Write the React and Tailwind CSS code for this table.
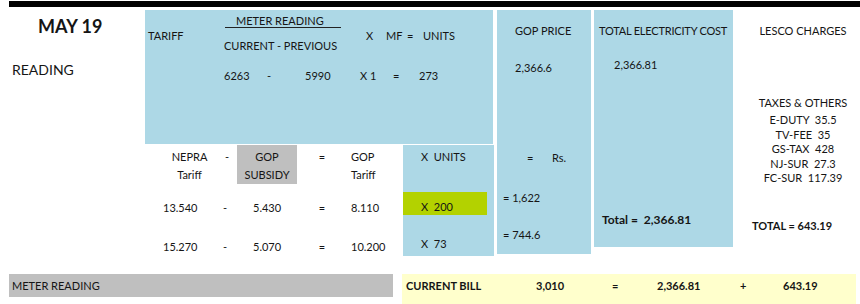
export default function App() {
  const blue = "bg-[#add8e6]";
  return (
    <div className="w-[860px] h-[304px] bg-white text-[#151515] font-['Lato',sans-serif] text-[11px] leading-none overflow-hidden">
      <div className="pl-[9px] pt-[1px]">
        <div className="h-[6px] bg-black" />
      </div>
      <div className="flex mt-[3px] h-[264px]">
        {/* left column */}
        <div className="w-[145px] shrink-0">
          <div className="pl-[38px] pt-[7px] text-[18px] font-bold">MAY 19</div>
          <div className="pl-[12px] mt-[28px] text-[14px]">READING</div>
        </div>

        {/* middle */}
        <div className="w-[349px] shrink-0">
          <div className={`h-[134px] w-[348px] ${blue} flex`}>
            <div className="w-[79px] pl-[3px] pt-[20px]">TARIFF</div>
            <div className="flex-1 flex flex-col">
              <div className="flex">
                <div className="w-[142px]">
                  <div className="pt-[5px] pl-[1px]">
                    <div className="w-[116px] pl-[11px] pb-[1px] border-b border-[#222]">METER READING</div>
                  </div>
                  <div className="mt-[12px]">CURRENT - PREVIOUS</div>
                </div>
                <div className="pt-[20px] flex">
                  <div className="w-[20px]">X</div>
                  <div className="w-[21px]">MF</div>
                  <div className="w-[16px]">=</div>
                  <div>UNITS</div>
                </div>
              </div>
              <div className="flex mt-[19px]">
                <div className="w-[43px]">6263</div>
                <div className="w-[38px]">-</div>
                <div className="w-[55px]">5990</div>
                <div className="w-[10px]">X</div>
                <div className="w-[23px]">1</div>
                <div className="w-[26px]">=</div>
                <div>273</div>
              </div>
            </div>
          </div>

          {/* tariff table */}
          <div className="mt-[1px] flex h-[111px]">
            <div className="w-[77px] flex flex-col">
              <div className="pt-[6px] ml-[26px] w-[37px] text-center">NEPRA</div>
              <div className="mt-[7px] ml-[26px] w-[37px] text-center">Tariff</div>
              <div className="mt-[22px] pl-[18px]">13.540</div>
              <div className="mt-[28px] pl-[18px]">15.270</div>
            </div>
            <div className="w-[15px] flex flex-col">
              <div className="pt-[6px] pl-[3px]">-</div>
              <div className="mt-[40px] pl-[1px]">-</div>
              <div className="mt-[28px] pl-[1px]">-</div>
            </div>
            <div className="w-[60px] flex flex-col">
              <div className="h-[39px] bg-[#bfbfbf] flex flex-col items-center">
                <div className="pt-[6px]">GOP</div>
                <div className="mt-[7px]">SUBSIDY</div>
              </div>
              <div className="mt-[18px] pl-[16px]">5.430</div>
              <div className="mt-[28px] pl-[16px]">5.070</div>
            </div>
            <div className="w-[50px] flex flex-col items-center">
              <div className="pt-[6px]">=</div>
              <div className="mt-[40px]">=</div>
              <div className="mt-[28px]">=</div>
            </div>
            <div className="w-[56px] flex flex-col pl-[4px]">
              <div className="pt-[6px]">GOP</div>
              <div className="mt-[7px]">Tariff</div>
              <div className="mt-[22px]">8.110</div>
              <div className="mt-[28px]">10.200</div>
            </div>
            <div className={`w-[91px] ${blue} flex flex-col`}>
              <div className="pt-[6px] pl-[18px] whitespace-pre">{"X  UNITS"}</div>
              <div className="mt-[30px] w-[84px] h-[23px] bg-[#b3d200] pl-[18px] pt-[9px] whitespace-pre">{"X  200"}</div>
              <div className="mt-[23px] pl-[18px] whitespace-pre">{"X  73"}</div>
            </div>
          </div>
        </div>

        {/* GOP price */}
        <div className={`ml-[3px] w-[94px] h-[244px] ${blue} shrink-0 flex flex-col`}>
          <div className="pt-[15px] pl-[18px]">GOP PRICE</div>
          <div className="mt-[26px] pl-[18px]">2,366.6</div>
          <div className="mt-[79px] pl-[30px] flex">
            <div className="w-[25px]">=</div>
            <div>Rs.</div>
          </div>
          <div className="mt-[29px] pl-[6px]">= 1,622</div>
          <div className="mt-[26px] pl-[6px]">= 744.6</div>
        </div>

        {/* total electricity cost */}
        <div className={`ml-[3px] w-[139px] h-[237px] ${blue} shrink-0 flex flex-col`}>
          <div className="pt-[15px] pl-[5px] tracking-[-0.2px]">TOTAL ELECTRICITY COST</div>
          <div className="mt-[23px] pl-[20px]">2,366.81</div>
          <div className="mt-[144px] pl-[8px] text-[12px] font-bold whitespace-pre">{"Total =  2,366.81"}</div>
        </div>

        {/* lesco */}
        <div className="flex-1 flex flex-col">
          <div className="pt-[15px] pl-[13px] text-center">LESCO CHARGES</div>
          <div className="mt-[61px] pl-[13px] text-center">TAXES &amp; OTHERS</div>
          <div className="mt-[5px] pl-[13px] text-center leading-[14.5px] whitespace-pre">
            <div>{"E-DUTY  35.5"}</div>
            <div>{"TV-FEE  35"}</div>
            <div>{"GS-TAX  428"}</div>
            <div>{"NJ-SUR  27.3"}</div>
            <div>{"FC-SUR  117.39"}</div>
          </div>
          <div className="mt-[34px] pl-[19px] font-bold">TOTAL = 643.19</div>
        </div>
      </div>

      {/* bottom row */}
      <div className="flex items-start">
        <div className="ml-[9px] w-[384px] h-[23px] bg-[#bfbfbf] flex items-center pl-[3px]">METER READING</div>
        <div className="ml-[9px] w-[454px] h-[30px] bg-[#ffffcc] flex pt-[6px] font-bold">
          <div className="w-[134px] pl-[4px]">CURRENT BILL</div>
          <div className="w-[76px]">3,010</div>
          <div className="w-[45px]">=</div>
          <div className="w-[83px]">2,366.81</div>
          <div className="w-[43px]">+</div>
          <div>643.19</div>
        </div>
      </div>
    </div>
  );
}
